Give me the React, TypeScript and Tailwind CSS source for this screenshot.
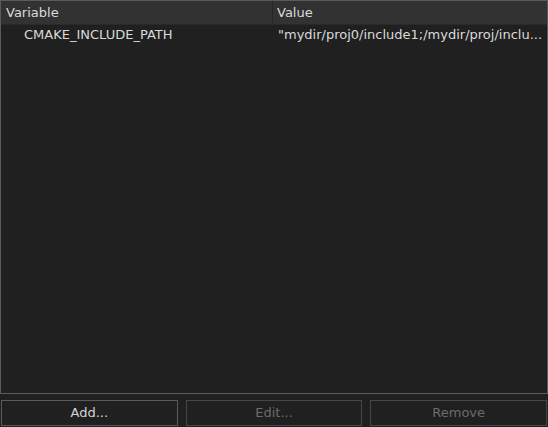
import React from "react";

export default function App() {
  const font = { fontFamily: '"DejaVu Sans", "Noto Sans", sans-serif' };
  return (
    <div className="w-[548px] h-[427px] bg-[#202020] flex flex-col text-[13px] text-[#dadada]" style={font}>
      <div className="h-[394px] border border-[#5a5a5a] flex flex-col">
        <div className="h-[24px] bg-[#323232] flex border-b border-[#2a2a2a]">
          <div className="w-[272px] pl-[5px] flex items-center border-r border-[#262626]">Variable</div>
          <div className="flex-1 pl-[4px] flex items-center">Value</div>
        </div>
        <div className="h-[20px] flex">
          <div className="w-[273px] pl-[23px] flex items-center whitespace-nowrap">CMAKE_INCLUDE_PATH</div>
          <div className="flex-1 min-w-0 pl-[4px] flex items-center whitespace-nowrap">
            "mydir/proj0/include1;/mydir/proj/inclu...
          </div>
        </div>
        <div className="flex-1" />
      </div>
      <div className="flex gap-[8px] px-[1px] pt-[6px]">
        <button className="flex-1 h-[26px] border border-[#5a5a5a] text-[#d4d4d4]">Add...</button>
        <button className="flex-1 h-[26px] border border-[#474747] text-[#6b6b6b]">Edit...</button>
        <button className="flex-1 h-[26px] border border-[#474747] text-[#6b6b6b]">Remove</button>
      </div>
    </div>
  );
}
